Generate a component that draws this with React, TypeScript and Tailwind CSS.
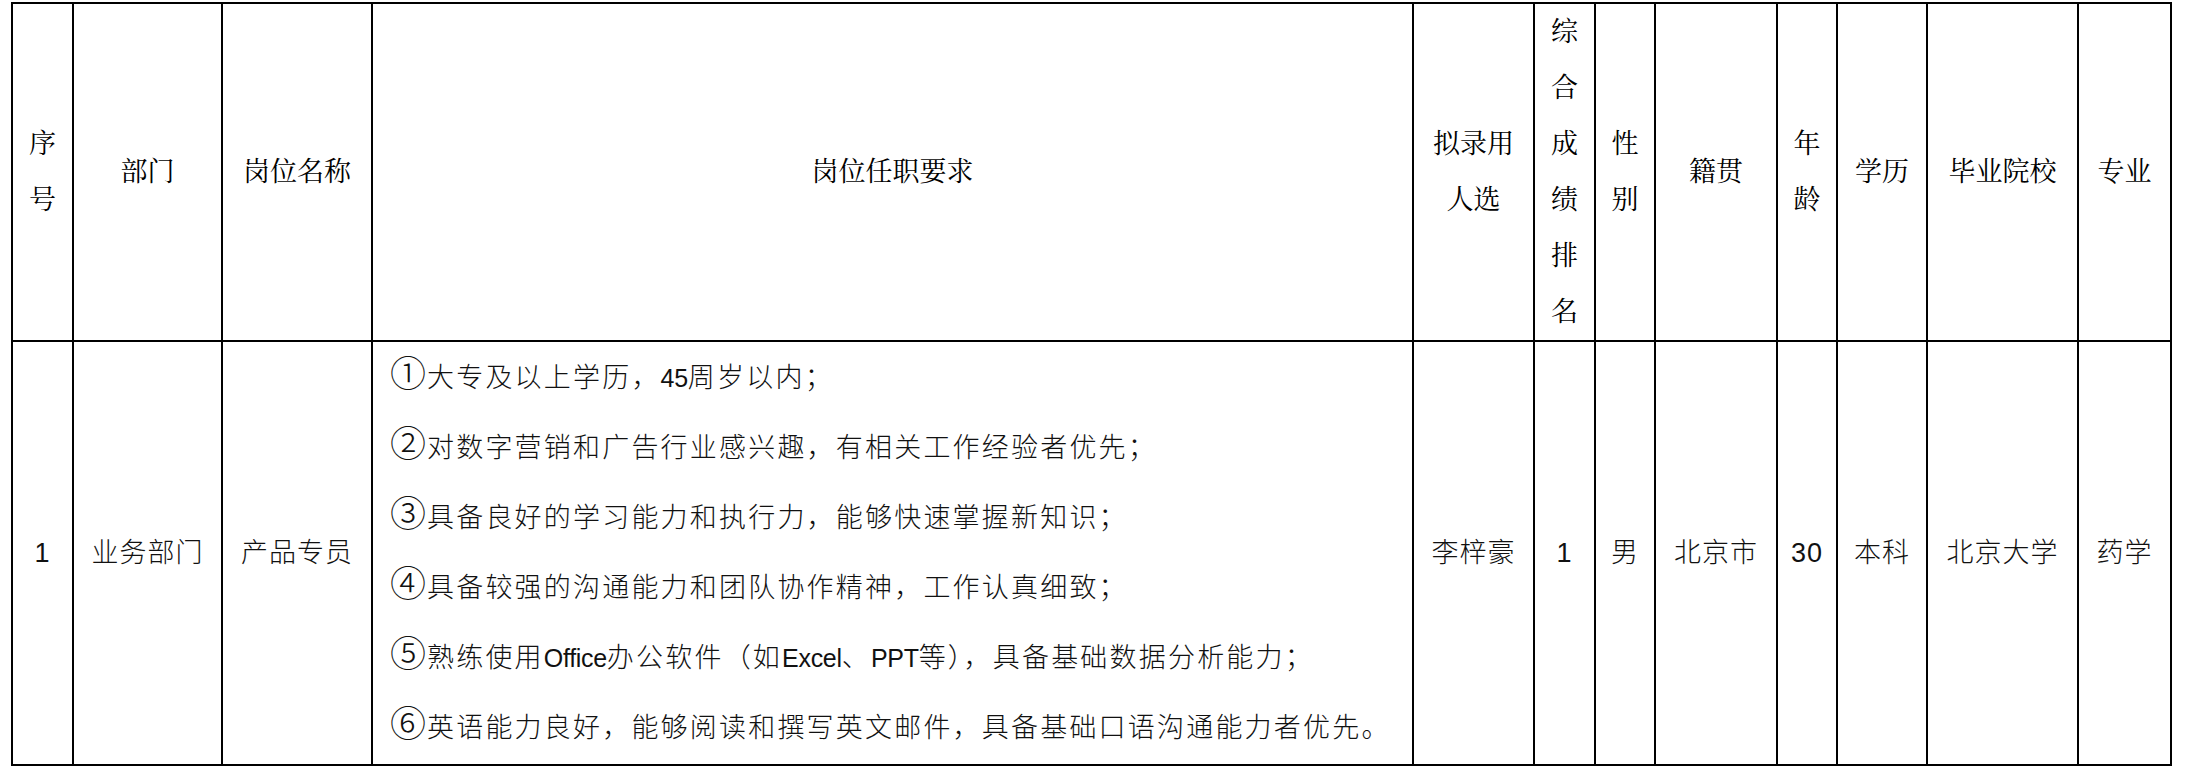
const head = "border-2 border-black text-center align-middle px-2 font-['Liberation_Serif','Noto_Serif_CJK_SC','Noto_Sans_CJK_SC',serif] text-[27px] leading-[56px] text-black"
const cell = "border-2 border-black text-center align-middle px-2 font-['Liberation_Sans','Noto_Sans_CJK_SC',sans-serif] font-light text-[27px] tracking-[1px] text-[#111]"

const requirements = [
    ['①', '大专及以上学历，45周岁以内；'],
    ['②', '对数字营销和广告行业感兴趣，有相关工作经验者优先；'],
    ['③', '具备良好的学习能力和执行力，能够快速掌握新知识；'],
    ['④', '具备较强的沟通能力和团队协作精神，工作认真细致；'],
    ['⑤', '熟练使用Office办公软件（如Excel、PPT等），具备基础数据分析能力；'],
    ['⑥', '英语能力良好，能够阅读和撰写英文邮件，具备基础口语沟通能力者优先。'],
]

// latin words are narrower in the original (Calibri)
function Line({ text }: { text: string }) {
    return (
        <>
            {text.split(/([A-Za-z0-9]+)/).map((part, i) =>
                /^[A-Za-z0-9]+$/.test(part) ? (
                    <span key={i} className="text-[25px] tracking-[-0.3px]">{part}</span>
                ) : (
                    <span key={i}>{part}</span>
                )
            )}
        </>
    )
}

export default function App() {
    return (
        <div className="min-h-[773px] w-[2190px] bg-white pt-[2px] pl-[11px]">
            <table className="table-fixed border-collapse border-2 border-black w-[2159px]">
                <colgroup>
                    <col className="w-[61px]" />
                    <col className="w-[149px]" />
                    <col className="w-[150px]" />
                    <col className="w-[1041px]" />
                    <col className="w-[121px]" />
                    <col className="w-[61px]" />
                    <col className="w-[60px]" />
                    <col className="w-[122px]" />
                    <col className="w-[60px]" />
                    <col className="w-[90px]" />
                    <col className="w-[151px]" />
                    <col className="w-[93px]" />
                </colgroup>
                <thead>
                    <tr className="h-[338px]">
                        <th className={head + ' font-normal'}>序号</th>
                        <th className={head + ' font-normal'}>部门</th>
                        <th className={head + ' font-normal'}>岗位名称</th>
                        <th className={head + ' font-normal'}>岗位任职要求</th>
                        <th className={head + ' font-normal'}>拟录用人选</th>
                        <th className={head + ' font-normal'}>综合成绩排名</th>
                        <th className={head + ' font-normal'}>性别</th>
                        <th className={head + ' font-normal'}>籍贯</th>
                        <th className={head + ' font-normal'}>年龄</th>
                        <th className={head + ' font-normal'}>学历</th>
                        <th className={head + ' font-normal'}>毕业院校</th>
                        <th className={head + ' font-normal'}>专业</th>
                    </tr>
                </thead>
                <tbody>
                    <tr className="h-[424px]">
                        <td className={cell}>1</td>
                        <td className={cell}>业务部门</td>
                        <td className={cell}>产品专员</td>
                        <td className="border-2 border-black align-middle pl-[17px] pr-2 font-['Liberation_Sans','Noto_Sans_CJK_SC',sans-serif] font-light text-[27px] tracking-[2.2px] text-[#111]">
                            {requirements.map(([n, r]) => (
                                <div key={n} className="h-[70px] leading-[70px] whitespace-nowrap">
                                    <span className="inline-block w-[37px] text-[36px] leading-none tracking-normal">{n}</span>
                                    <Line text={r} />
                                </div>
                            ))}
                        </td>
                        <td className={cell}>李梓豪</td>
                        <td className={cell}>1</td>
                        <td className={cell}>男</td>
                        <td className={cell}>北京市</td>
                        <td className={cell}>30</td>
                        <td className={cell}>本科</td>
                        <td className={cell}>北京大学</td>
                        <td className={cell}>药学</td>
                    </tr>
                </tbody>
            </table>
        </div>
    )
}
